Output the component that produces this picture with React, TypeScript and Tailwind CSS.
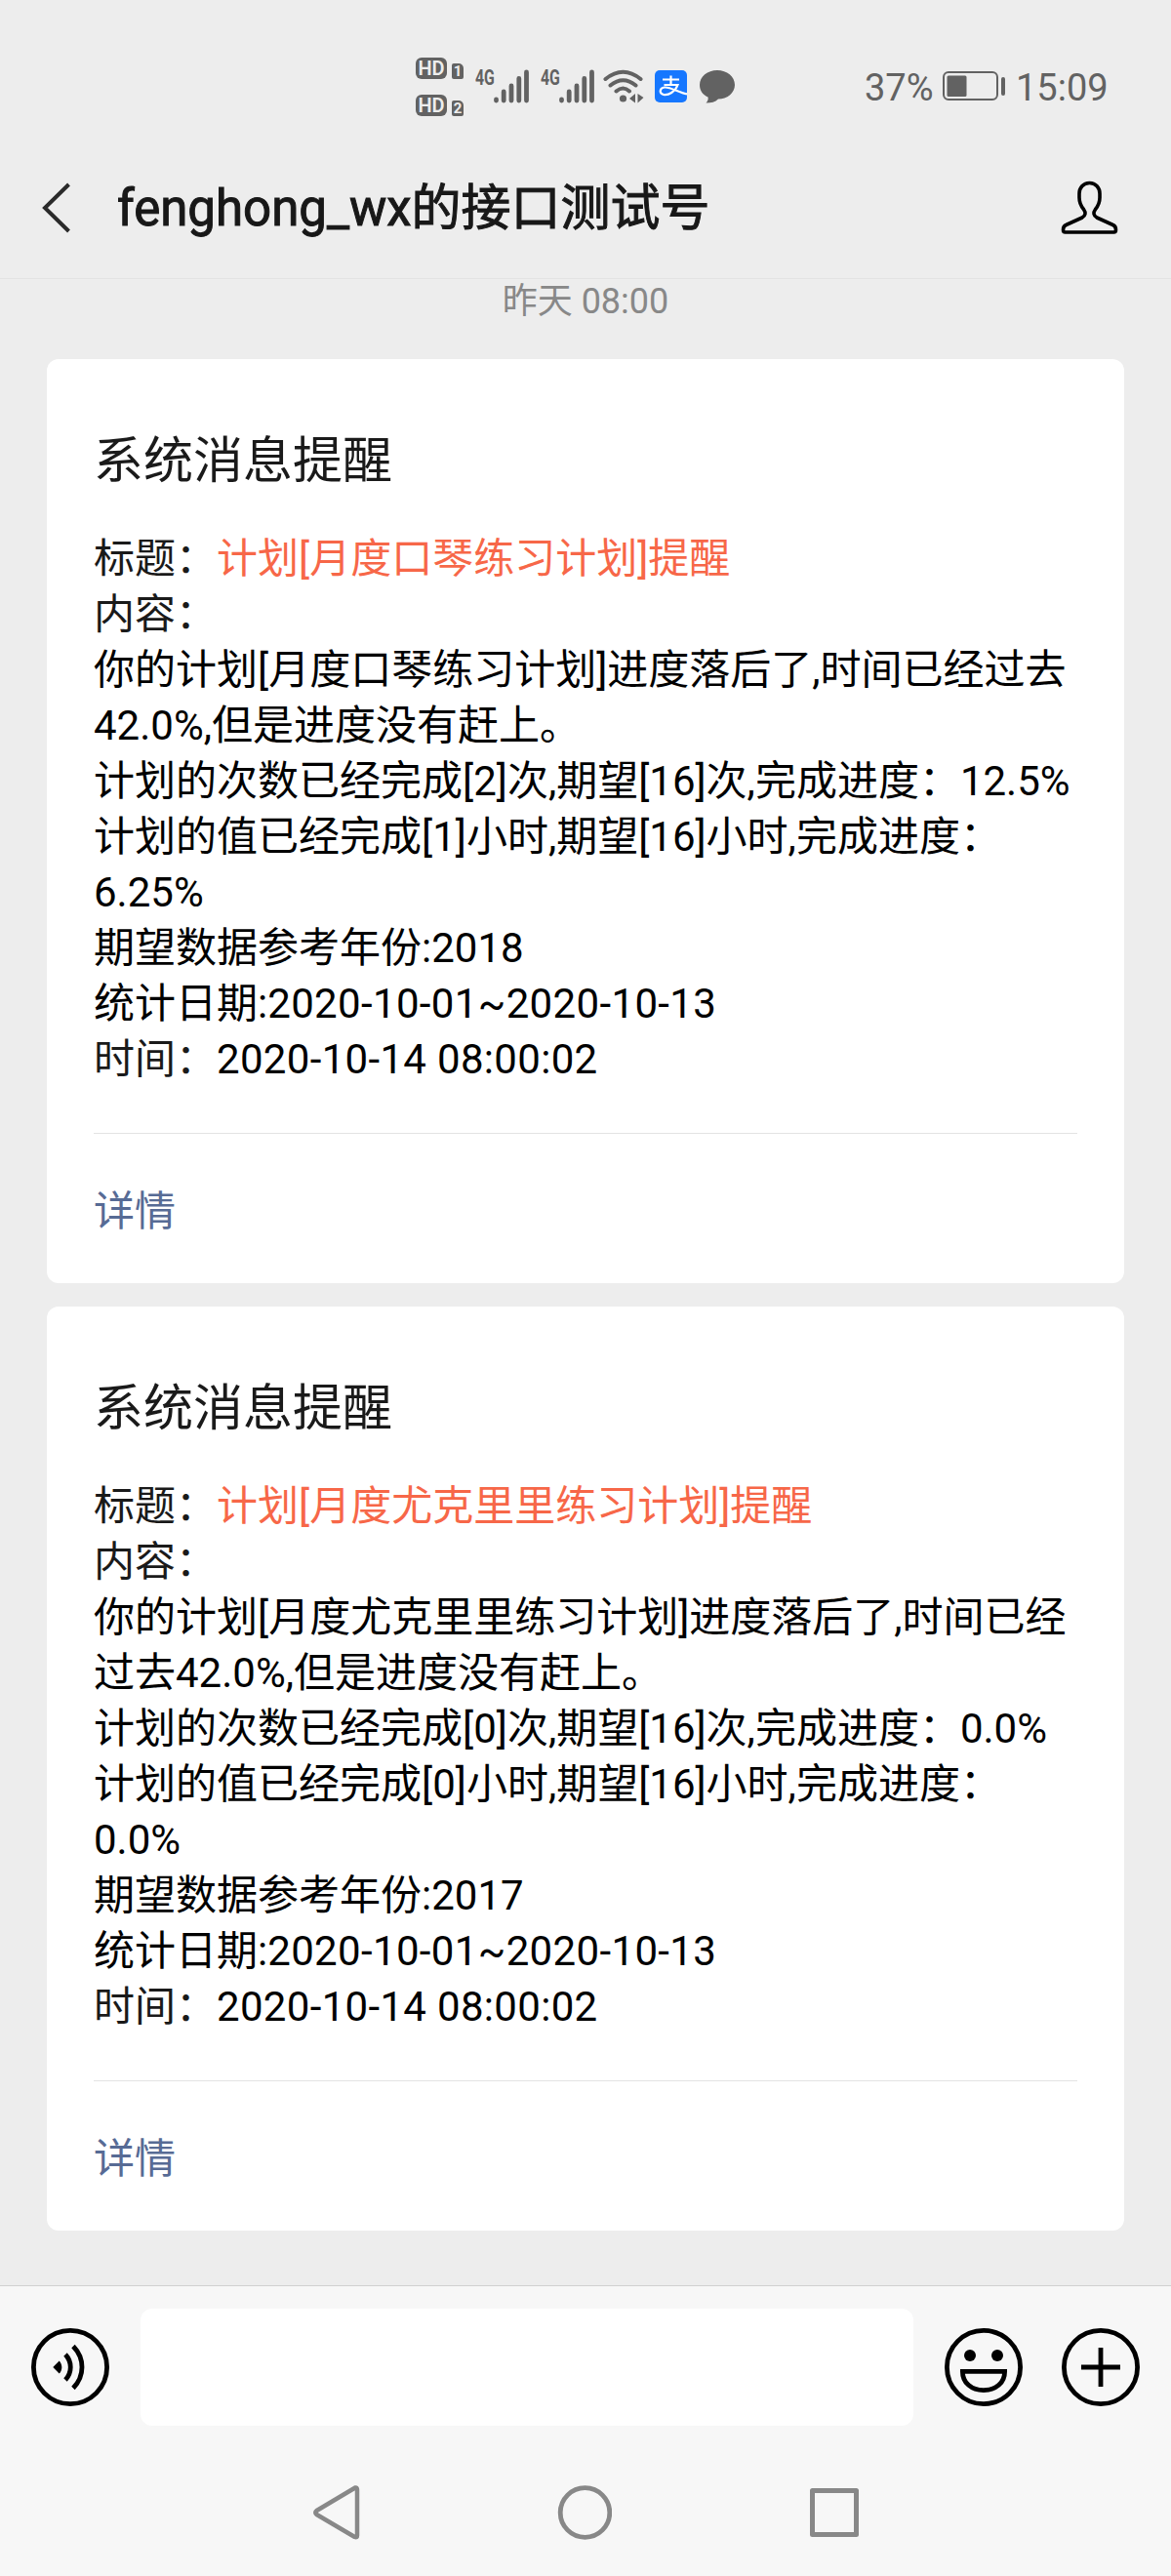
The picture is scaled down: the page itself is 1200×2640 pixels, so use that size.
import type { ReactNode } from 'react';

interface Message {
    plan: string;
    lines: string[];
    year: string;
}

const messages: Message[] = [
    {
        plan: '计划[月度口琴练习计划]提醒',
        lines: [
            '你的计划[月度口琴练习计划]进度落后了,时间已经过去',
            '42.0%,但是进度没有赶上。',
            '计划的次数已经完成[2]次,期望[16]次,完成进度：12.5%',
            '计划的值已经完成[1]小时,期望[16]小时,完成进度：',
            '6.25%',
        ],
        year: '2018',
    },
    {
        plan: '计划[月度尤克里里练习计划]提醒',
        lines: [
            '你的计划[月度尤克里里练习计划]进度落后了,时间已经',
            '过去42.0%,但是进度没有赶上。',
            '计划的次数已经完成[0]次,期望[16]次,完成进度：0.0%',
            '计划的值已经完成[0]小时,期望[16]小时,完成进度：',
            '0.0%',
        ],
        year: '2017',
    },
];

function HdBadge({ sim }: { sim: string }) {
    return (
        <div className="flex h-[22px] items-end gap-[5px]">
            <span className="flex h-[22px] w-8 items-center justify-center rounded-[6px] bg-[#626262] text-[20px] font-semibold leading-none text-[#ededed]">HD</span>
            <span className="flex h-4 w-3 items-center justify-center rounded-[2px] rounded-tr-[5px] bg-[#626262] text-[15px] font-bold leading-none text-[#ededed]">{sim}</span>
        </div>
    );
}

function Signal() {
    return (
        <div className="flex h-9 w-[55px] items-start">
            <span className="w-[19px] origin-left scale-x-[0.72] text-[22px] font-bold leading-[18px] text-[#626262]">4G</span>
            <svg className="h-9 w-9" viewBox="0 0 36 36" stroke="#626262" strokeWidth="4.8" strokeLinecap="round">
                <path d="M2.5 31v1M10.2 23v9M18 17v15M25.8 9.5v22.5M33.5 3v29" />
            </svg>
        </div>
    );
}

function Wifi() {
    return (
        <svg className="h-9 w-[42px]" viewBox="0 0 42 36" fill="none" stroke="#626262" strokeWidth="4" strokeLinecap="round">
            <path d="M2.5 10Q20.5 -4.500 38.500 10M7.500 16.500Q20.500 6 33.500 16.500M13.500 22.500Q20.500 16.500 27 22.500" />
            <circle cx="20.5" cy="30" r="3.6" fill="#626262" stroke="none" />
            <path d="M33 25v9.500l-6-4.500zM35.500 25v9.500l6-5.500z" fill="#626262" stroke="none" />
        </svg>
    );
}

function StatusBar() {
    return (
        <div className="flex h-[142px] pt-[59px] text-[38px] leading-none text-[#626262]">
            <div className="ml-[426px] flex w-[61px] flex-col gap-4">
                <HdBadge sim="1" />
                <HdBadge sim="2" />
            </div>
            <div className="flex pt-3">
                <Signal />
                <div className="ml-3"><Signal /></div>
                <div className="ml-[9px]"><Wifi /></div>
                {/* Alipay */}
                <svg className="ml-[11px] mt-px h-[33px] w-[33px]" viewBox="0 0 33 33" fill="none" stroke="#fff" strokeWidth="2.2">
                    <rect width="33" height="33" rx="5" fill="#1677ff" stroke="none" />
                    <path d="M8 9.500h17M16.500 5.500v9M9.500 15h14C21 22 14 26 9 25c-5-1.500-4-7 1-7.500 6-.500 14 5 23 7" />
                </svg>
                <svg className="ml-[13px] mt-px h-[34px] w-9" viewBox="0 0 36 34" fill="#626262">
                    <path d="M18 0c10 0 18 6.500 18 15s-8 14.500-17 14.500c-3 3-7 4-12.500 4 2-2 2.500-4 2-6C3 25 0 20.500 0 15 0 6.500 8 0 18 0z" />
                </svg>
            </div>
            <div className="ml-[133px] flex pt-3">
                <span className="w-[80px]">37%</span>
                <svg className="h-[33px] w-[64px]" viewBox="0 0 64 33">
                    <rect x="1" y="3" width="55" height="28" rx="5" fill="none" stroke="#626262" strokeWidth="2" />
                    <rect x="4.5" y="6.5" width="20" height="21.500" rx="1.5" fill="#626262" />
                    <rect x="60" y="8" width="4" height="19" rx="2" fill="#626262" />
                </svg>
                <span className="ml-[11px]">15:09</span>
            </div>
        </div>
    );
}

function Header() {
    return (
        <div className="flex h-36 items-center border-b border-[#e3e3e3] pl-[43px] pr-[54px]">
            <svg className="mb-px h-[52px] w-[30px]" viewBox="0 0 30 52" fill="none" stroke="#2a2a2a" strokeWidth="4">
                <path d="M27.500 2L3 26l24.500 24" />
            </svg>
            <h1 className="ml-[47px] flex-1 whitespace-nowrap text-[51px] leading-none text-[#181818] [-webkit-text-stroke:1px_#181818]">fenghong_wx的接口测试号</h1>
            <svg className="mb-[3px] h-[56px] w-[59px]" viewBox="0 0 59 56" fill="none" stroke="#000" strokeWidth="3.6" strokeLinejoin="round">
                <path d="M29.500 3.500c-6.500 0-10.500 5-10.500 11v4c0 5 2 9 4.500 12 2.500 3.500 2 6.500-1.500 8.500L5.500 46.500C3 47.500 2.500 49 2.500 51.500c0 1.500.500 2.500 2 2.500h50c1.500 0 2-1 2-2.500 0-2.500-.500-4-3-5L37 39c-3.500-2-4-5-1.500-8.500 2.500-3 4.500-7 4.500-12v-4c0-6-4-11-10.500-11z" />
            </svg>
        </div>
    );
}

function Card({ plan, lines, year }: Message) {
    return (
        <div className="h-[947px] rounded-[12px] bg-white px-12 pt-[75px]">
            <h2 className="text-[51px] leading-[60px] text-[#1a1a1a]">系统消息提醒</h2>
            <div className="mt-[41px] whitespace-nowrap text-[42px] leading-[57px] text-black">
                <p><span className="text-[#1a1a1a]">标题：</span><span className="text-[#f76748]">{plan}</span></p>
                <p className="text-[#1a1a1a]">内容：</p>
                {lines.map((line) => (
                    <p key={line}>{line}</p>
                ))}
                <p>期望数据参考年份:{year}</p>
                <p>统计日期:<span className="tracking-[0.35px]">2020-10-01~2020-10-13</span></p>
                <p><span className="text-[#1a1a1a]">时间：</span><span className="tracking-[0.32px]">2020-10-14 08:00:02</span></p>
            </div>
            <div className="mt-[47px] border-t border-[#e3e3e3] pt-[51px] text-[42px] leading-[57px] text-[#576b95]">详情</div>
        </div>
    );
}

function RoundIcon({ children }: { children?: ReactNode }) {
    return (
        <svg className="h-20 w-20" viewBox="0 0 80 80" fill="none" stroke="#000" strokeWidth="4.8">
            <circle cx="40" cy="40" r="37.6" />
            {children}
        </svg>
    );
}

function InputBar() {
    return (
        <div className="flex h-[167px] items-center border-t border-[#d0d0d0] px-8">
            <RoundIcon>
                <path d="M22.300 40l6.400-6.600c3.500 4 3.500 9.200 0 13.200z" fill="#000" stroke="none" />
                <path d="M35 27c7 7.500 7 18.500 0 26M43 18.500c12 12.500 12 30.500 0 43" />
            </RoundIcon>
            <div className="ml-8 h-[120px] flex-1 rounded-[12px] bg-white" />
            <div className="ml-8 flex gap-10">
                <RoundIcon>
                    <circle cx="26" cy="28" r="6" fill="#000" stroke="none" />
                    <circle cx="54" cy="28" r="6" fill="#000" stroke="none" />
                    <path d="M18.400 44.400h43.200c0 11.500-9 19.200-21.600 19.200s-21.600-7.700-21.600-19.200z" />
                </RoundIcon>
                <RoundIcon>
                    <path d="M40 20v40M20 40h40" />
                </RoundIcon>
            </div>
        </div>
    );
}

function NavBar() {
    return (
        <div className="flex h-[131px] items-center pl-[320px] pt-px">
            <svg className="h-[58px] w-[50px]" viewBox="0 0 50 58" fill="none" stroke="#888" strokeWidth="4.5" strokeLinejoin="round">
                <path d="M44 3.500Q46 3 46 5.500v47Q46 55 43.500 54L4.500 31Q2 29 4.500 27z" />
            </svg>
            <svg className="ml-[201px] h-14 w-14" viewBox="0 0 56 56" fill="none" stroke="#888" strokeWidth="4.8">
                <circle cx="28.5" cy="28" r="25.3" />
            </svg>
            <svg className="ml-[203px] h-[50px] w-[50px]" viewBox="0 0 50 50" fill="none" stroke="#888" strokeWidth="5" strokeLinejoin="round">
                <rect x="2.5" y="2.5" width="45" height="45" />
            </svg>
        </div>
    );
}

function App() {
    return (
        <div lang="zh-CN" className="h-[2640px] w-[1200px] overflow-hidden bg-[#ededed] font-['Roboto','Noto_Sans_CJK_SC',sans-serif]">
            <StatusBar />
            <Header />
            <div className="h-[2056px] px-12">
                <p className="pt-[2px] text-center text-[36px] leading-[42px] text-[#888]">昨天 08:00</p>
                <div className="mt-[38px] flex flex-col gap-6">
                    {messages.map((msg) => (
                        <Card key={msg.plan} {...msg} />
                    ))}
                </div>
            </div>
            <div className="h-[298px] bg-[#f7f7f7]">
                <InputBar />
                <NavBar />
            </div>
        </div>
    );
}

export default App;
